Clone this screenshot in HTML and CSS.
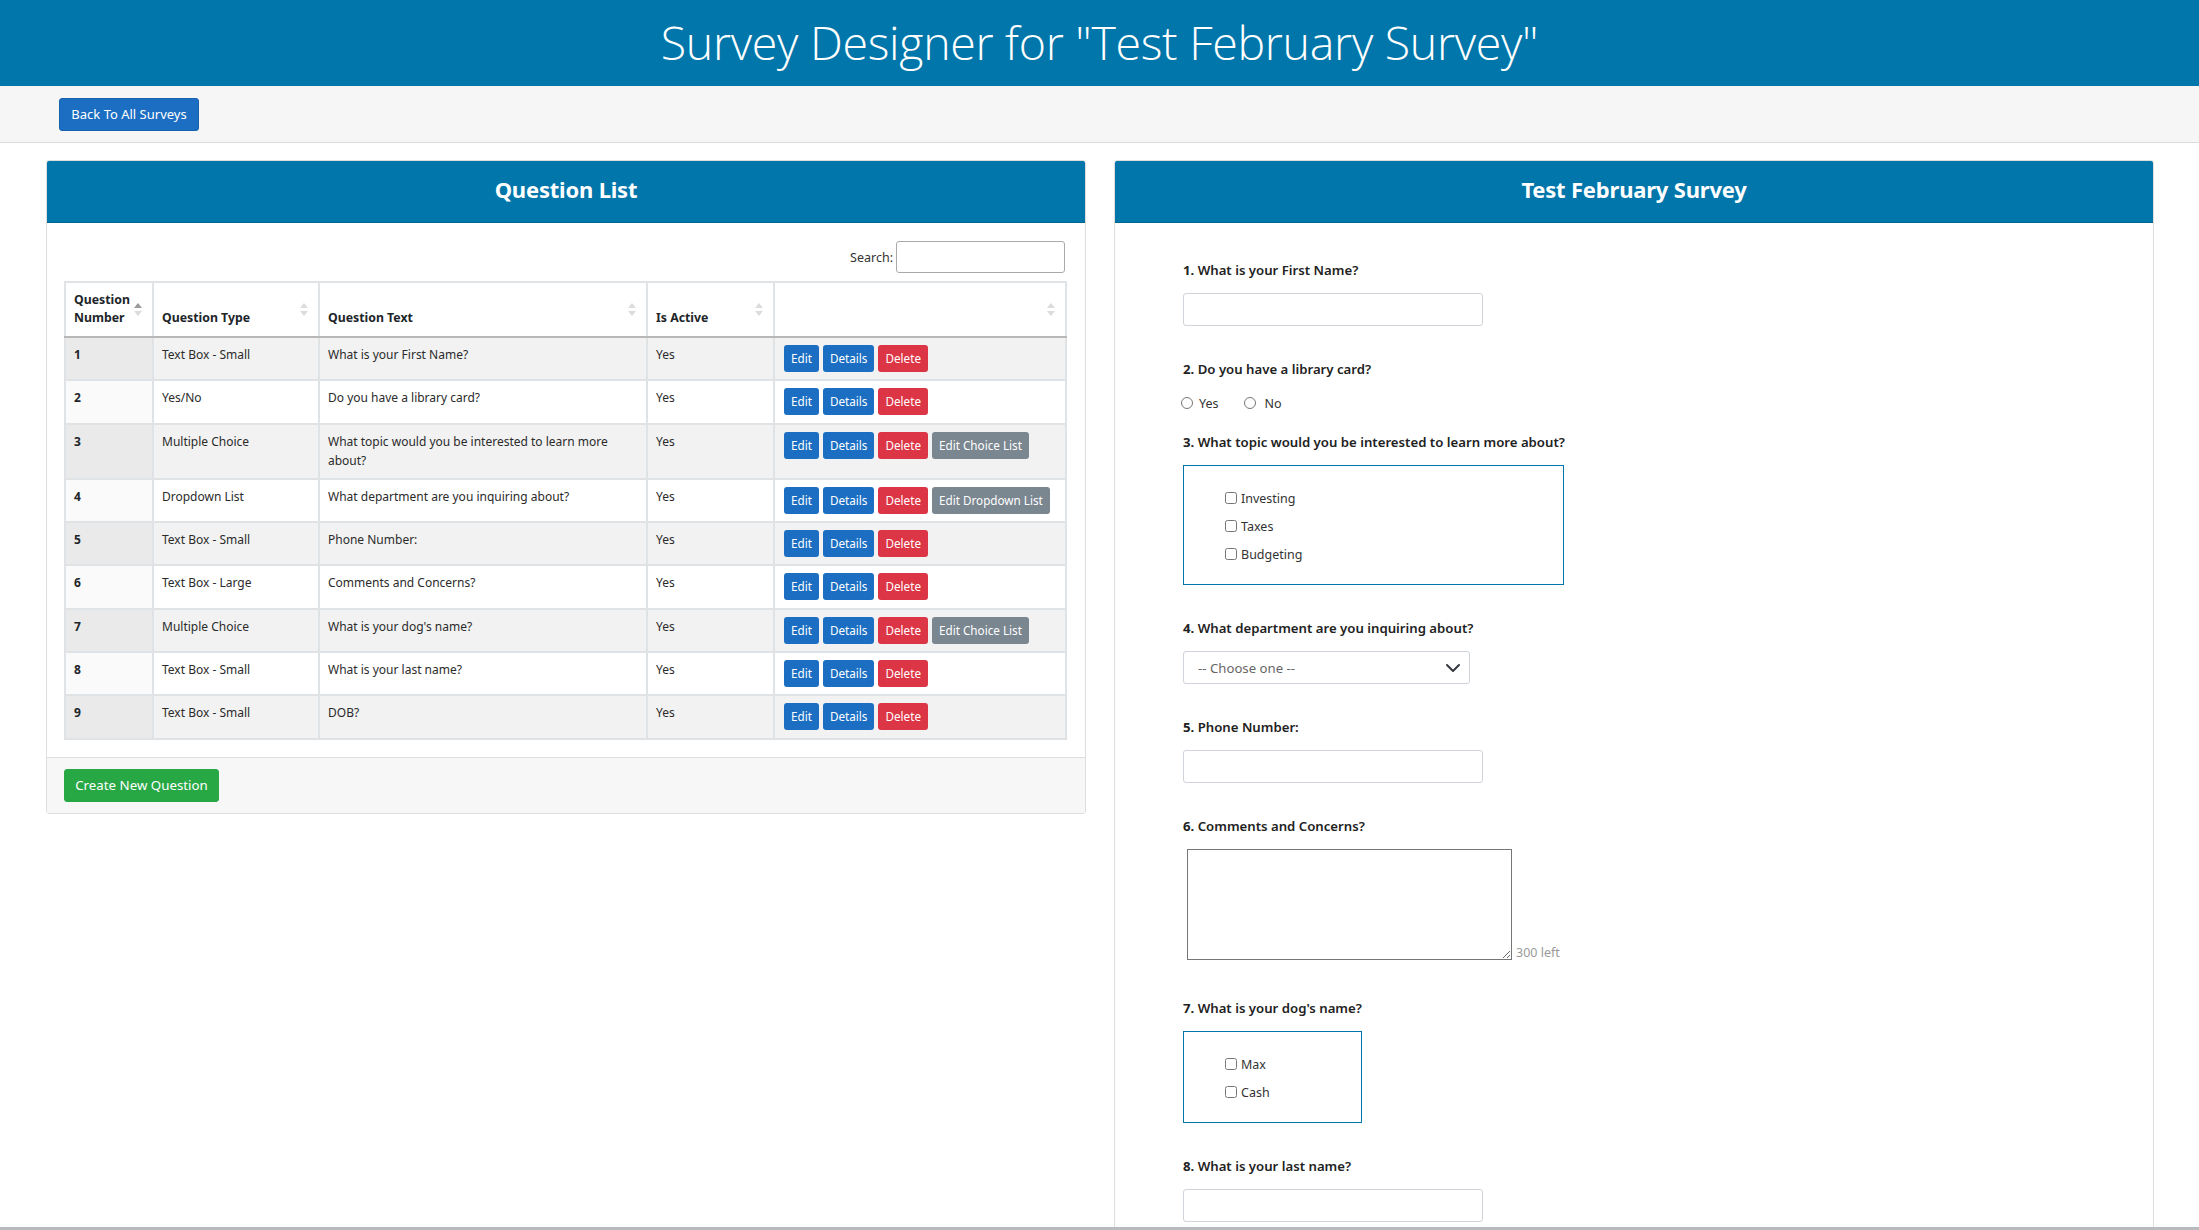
FILE: index.html
```html
<!DOCTYPE html>
<html lang="en">
<head>
<meta charset="utf-8">
<title>Survey Designer</title>
<link rel="stylesheet" href="styles.css">
</head>
<body>
<header class="topbar">
  <h1 class="page-title">Survey Designer for "Test February Survey"</h1>
</header>
<div class="toolbar">
  <a class="btn btn-primary btn-back" href="#">Back To All Surveys</a>
</div>
<main class="main">
  <section class="card">
    <div class="card-header">Question List</div>
    <div class="card-body list-body">
      <div class="search-row">
        <label class="search-label">Search:</label>
        <input class="search-input" type="text">
      </div>
      <table class="qtable">
        <colgroup>
          <col class="c1"><col class="c2"><col class="c3"><col class="c4"><col class="c5">
        </colgroup>
        <thead>
          <tr>
            <th class="sort sort-asc">Question<br>Number</th>
            <th class="sort">Question Type</th>
            <th class="sort">Question Text</th>
            <th class="sort">Is Active</th>
            <th class="sort"></th>
          </tr>
        </thead>
        <tbody>
          <tr class="odd">
            <td class="num">1</td><td>Text Box - Small</td><td>What is your First Name?</td><td>Yes</td>
            <td><div class="actions"><a class="btn-sm blue">Edit</a><a class="btn-sm blue">Details</a><a class="btn-sm red">Delete</a></div></td>
          </tr>
          <tr class="even">
            <td class="num">2</td><td>Yes/No</td><td>Do you have a library card?</td><td>Yes</td>
            <td><div class="actions"><a class="btn-sm blue">Edit</a><a class="btn-sm blue">Details</a><a class="btn-sm red">Delete</a></div></td>
          </tr>
          <tr class="odd">
            <td class="num">3</td><td>Multiple Choice</td><td>What topic would you be interested to learn more about?</td><td>Yes</td>
            <td><div class="actions"><a class="btn-sm blue">Edit</a><a class="btn-sm blue">Details</a><a class="btn-sm red">Delete</a><a class="btn-sm gray">Edit Choice List</a></div></td>
          </tr>
          <tr class="even">
            <td class="num">4</td><td>Dropdown List</td><td>What department are you inquiring about?</td><td>Yes</td>
            <td><div class="actions"><a class="btn-sm blue">Edit</a><a class="btn-sm blue">Details</a><a class="btn-sm red">Delete</a><a class="btn-sm gray">Edit Dropdown List</a></div></td>
          </tr>
          <tr class="odd">
            <td class="num">5</td><td>Text Box - Small</td><td>Phone Number:</td><td>Yes</td>
            <td><div class="actions"><a class="btn-sm blue">Edit</a><a class="btn-sm blue">Details</a><a class="btn-sm red">Delete</a></div></td>
          </tr>
          <tr class="even">
            <td class="num">6</td><td>Text Box - Large</td><td>Comments and Concerns?</td><td>Yes</td>
            <td><div class="actions"><a class="btn-sm blue">Edit</a><a class="btn-sm blue">Details</a><a class="btn-sm red">Delete</a></div></td>
          </tr>
          <tr class="odd">
            <td class="num">7</td><td>Multiple Choice</td><td>What is your dog's name?</td><td>Yes</td>
            <td><div class="actions"><a class="btn-sm blue">Edit</a><a class="btn-sm blue">Details</a><a class="btn-sm red">Delete</a><a class="btn-sm gray">Edit Choice List</a></div></td>
          </tr>
          <tr class="even">
            <td class="num">8</td><td>Text Box - Small</td><td>What is your last name?</td><td>Yes</td>
            <td><div class="actions"><a class="btn-sm blue">Edit</a><a class="btn-sm blue">Details</a><a class="btn-sm red">Delete</a></div></td>
          </tr>
          <tr class="odd">
            <td class="num">9</td><td>Text Box - Small</td><td>DOB?</td><td>Yes</td>
            <td><div class="actions"><a class="btn-sm blue">Edit</a><a class="btn-sm blue">Details</a><a class="btn-sm red">Delete</a></div></td>
          </tr>
        </tbody>
      </table>
    </div>
    <div class="card-footer">
      <a class="btn btn-success" href="#">Create New Question</a>
    </div>
  </section>

  <section class="card card-survey">
    <div class="card-header">Test February Survey</div>
    <div class="card-body survey-body">
      <div class="q">
        <label class="q-label"><b>1.</b> What is your First Name?</label>
        <input class="text-input" type="text">
      </div>
      <div class="q q-radio">
        <label class="q-label"><b>2.</b> Do you have a library card?</label>
        <div class="radio-row">
          <label class="radio-item"><input type="radio" name="q2"><span>Yes</span></label>
          <label class="radio-item"><input type="radio" name="q2"><span>No</span></label>
        </div>
      </div>
      <div class="q">
        <label class="q-label"><b>3.</b> What topic would you be interested to learn more about?</label>
        <div class="choice-box wide">
          <label class="check-item"><input type="checkbox"><span>Investing</span></label>
          <label class="check-item"><input type="checkbox"><span>Taxes</span></label>
          <label class="check-item"><input type="checkbox"><span>Budgeting</span></label>
        </div>
      </div>
      <div class="q">
        <label class="q-label"><b>4.</b> What department are you inquiring about?</label>
        <div class="select-wrap">
          <select class="select-input"><option>-- Choose one --</option></select>
          <svg class="chevron" width="16" height="10" viewBox="0 0 16 10"><path d="M2 2 L8 8 L14 2" fill="none" stroke="#343a40" stroke-width="2" stroke-linecap="round" stroke-linejoin="round"/></svg>
        </div>
      </div>
      <div class="q">
        <label class="q-label"><b>5.</b> Phone Number:</label>
        <input class="text-input" type="text">
      </div>
      <div class="q q-area">
        <label class="q-label"><b>6.</b> Comments and Concerns?</label>
        <div class="area-row">
          <textarea class="area-input"></textarea>
          <span class="chars-left">300 left</span>
        </div>
      </div>
      <div class="q">
        <label class="q-label"><b>7.</b> What is your dog's name?</label>
        <div class="choice-box narrow">
          <label class="check-item"><input type="checkbox"><span>Max</span></label>
          <label class="check-item"><input type="checkbox"><span>Cash</span></label>
        </div>
      </div>
      <div class="q q-last">
        <label class="q-label"><b>8.</b> What is your last name?</label>
        <input class="text-input" type="text">
      </div>
    </div>
  </section>
</main>
<div class="bottom-edge"></div>
</body>
</html>
```

FILE: styles.css
```css
* { box-sizing: border-box; }
html, body { margin: 0; padding: 0; }
body {
  font-family: "Noto Sans", "Open Sans", sans-serif;
  color: #212529;
  background: #fff;
  font-size: 13px;
}

.topbar {
  height: 86px;
  background: #0076aa;
  display: flex;
  align-items: center;
  justify-content: center;
}
.page-title {
  margin: 0;
  font-family: "Open Sans", "Noto Sans", sans-serif;
  font-weight: 300;
  font-size: 46.5px;
  color: #fff;
  letter-spacing: -0.3px;
  line-height: 1;
  padding-bottom: 2px;
}

.toolbar {
  height: 57px;
  background: #f6f6f6;
  border-bottom: 1px solid #dcdcdc;
  display: flex;
  align-items: center;
  padding-left: 59px;
}

.btn {
  display: inline-block;
  text-decoration: none;
  color: #fff;
  border-radius: 3px;
  font-size: 13px;
  line-height: 19px;
  padding: 7px 11px;
}
.btn-primary { background: #1b6ec2; border: 1px solid #1861ac; }
.btn-back { width: 140px; text-align: center; padding: 6px 0; }
.btn-success { background: #28a745; border: 1px solid #28a745; width: 155px; text-align: center; padding: 6px 0; font-size: 13.3px; }

.main {
  display: grid;
  grid-template-columns: 1040px 1040px;
  column-gap: 28px;
  padding: 17px 45px 0 46px;
  align-items: start;
}

.card {
  border: 1px solid #dedede;
  border-radius: 3px;
  background: #fff;
}
.card-header {
  height: 62px;
  background: #0076aa;
  border-bottom: 1px solid #00628f;
  color: #fff;
  font-weight: 700;
  font-size: 22px;
  display: flex;
  align-items: center;
  justify-content: center;
  letter-spacing: -0.2px;
  border-radius: 2px 2px 0 0;
  padding-bottom: 5px;
}
.card-survey { min-height: 1100px; }

.list-body { padding: 18px 20px 17px 17px; }

.search-row {
  display: flex;
  justify-content: flex-end;
  align-items: center;
  margin-bottom: 8px;
}
.search-label { font-size: 12.5px; margin-right: 3px; color: #333; }
.search-input {
  width: 169px;
  height: 32px;
  border: 1px solid #aaa;
  border-radius: 3px;
  background: #fff;
}

.qtable {
  width: 1001px;
  border-collapse: collapse;
  table-layout: fixed;
  font-size: 12px;
  border-bottom: 2px solid #b5b5b5;
}
.qtable col.c1 { width: 88px; }
.qtable col.c2 { width: 166px; }
.qtable col.c3 { width: 328px; }
.qtable col.c4 { width: 127px; }
.qtable col.c5 { width: 292px; }

.qtable th, .qtable td {
  border: 2px solid #e0e3e6;
  text-align: left;
}
.qtable th {
  position: relative;
  font-weight: 700;
  font-size: 12.3px;
  line-height: 18px;
  padding: 8px 18px 9px 8px;
  vertical-align: bottom;
  border-bottom: 2px solid #b8b8b8;
  background: #fff;
}
.qtable th.sort::before,
.qtable th.sort::after {
  content: "";
  position: absolute;
  right: 10px;
  width: 0;
  height: 0;
  border-left: 4px solid transparent;
  border-right: 4px solid transparent;
}
.qtable th.sort::before {
  top: 20px;
  border-bottom: 5px solid #dcdcdc;
}
.qtable th.sort::after {
  top: 28px;
  border-top: 5px solid #dcdcdc;
}
.qtable th.sort-asc::before { border-bottom-color: #9a9a9a; }

.qtable td {
  padding: 7px 10px 7.3px 8px;
  line-height: 19.5px;
  vertical-align: top;
  color: #2b2b2b;
}
.qtable td.num { font-weight: 700; color: #212529; }
.qtable tr.odd td { background: #f2f2f2; }
.qtable tr.odd td.num { background: #eaeaea; }
.qtable tr.even td { background: #fff; }
.qtable tr.even td.num { background: #fafafa; }

.actions { display: flex; gap: 4px; padding-left: 1px; }
.btn-sm {
  display: inline-block;
  color: #fff;
  font-size: 11.7px;
  line-height: 17px;
  padding: 5px 7px;
  border-radius: 3px;
  white-space: nowrap;
}
.btn-sm.blue { background: #1b6ec2; }
.btn-sm.red { background: #dc3545; }
.btn-sm.gray { background: #7a8690; }

.card-footer {
  background: #f7f7f7;
  border-top: 1px solid #dedede;
  padding: 11px 17px 11px 17px;
}

/* survey form */
.survey-body { padding: 37px 68px 40px 68px; }
.q { margin-bottom: 33px; }
.q-radio { margin-bottom: 18px; }
.q-area { margin-bottom: 38px; }
.q-last { margin-bottom: 0; }
.q-label {
  display: block;
  font-size: 13.2px;
  font-weight: 600;
  line-height: 20px;
  margin-bottom: 13px;
  color: #222;
}
.q-label b { font-weight: 700; }

.text-input {
  display: block;
  width: 300px;
  height: 33px;
  border: 1px solid #ced4da;
  border-radius: 3px;
  background: #fff;
}

.radio-row { display: flex; align-items: center; height: 22px; margin-left: -2px; }
.radio-item { display: flex; align-items: center; font-size: 12.5px; color: #333; margin-right: 25px; }
.radio-item input { margin: 0 6px 0 0; width: 12px; height: 12px; }
.radio-item + .radio-item input { margin-right: 9px; }

.choice-box {
  border: 1px solid #0076aa;
  padding: 18px 0 16px 41px;
}
.choice-box.wide { width: 381px; }
.choice-box.narrow { width: 179px; }
.check-item {
  display: flex;
  align-items: center;
  height: 28px;
  font-size: 12.5px;
  color: #333;
}
.check-item input { margin: 0 4px 0 0; width: 12px; height: 12px; }

.select-wrap { position: relative; width: 287px; }
.select-input {
  display: block;
  width: 287px;
  height: 33px;
  border: 1px solid #ced4da;
  border-radius: 3px;
  background: #fff;
  -webkit-appearance: none;
  appearance: none;
  font-family: inherit;
  font-size: 13.2px;
  color: #666;
  padding: 0 14px;
}
.chevron { position: absolute; right: 9px; top: 12px; pointer-events: none; }

.area-row { display: flex; align-items: flex-end; padding-left: 4px; }
.area-input {
  width: 325px;
  height: 111px;
  border: 1px solid #767676;
  border-radius: 0;
  margin: 0;
  resize: both;
}
.chars-left { font-size: 12.5px; color: #9a9a9a; margin-left: 4px; line-height: 14px; }

.bottom-edge {
  position: fixed;
  left: 0;
  right: 0;
  bottom: 0;
  height: 3px;
  background: #b8bbbe;
}
```
